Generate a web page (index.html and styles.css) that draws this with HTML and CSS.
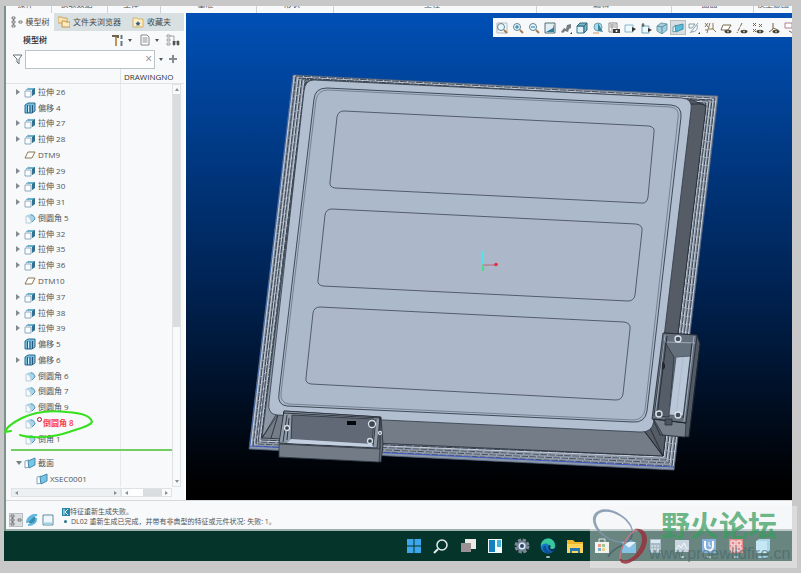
FILE: index.html
```html
<!DOCTYPE html>
<html lang="zh-CN">
<head>
<meta charset="utf-8">
<title>DL02</title>
<link rel="stylesheet" href="styles.css">
</head>
<body>
<svg class="sprite" aria-hidden="true">
  <symbol id="extrude" viewBox="0 0 12 12"><path d="M1 5h6v6H1z" fill="#fafcfd" stroke="#8eaabd"/><path d="M3 4l2-2h6v6l-3 2V4z" fill="#69b4d3"/><path d="M8 4l3-2v6l-3 2z" fill="#31718f"/><path d="M2 4l3-2" stroke="#6b9bb5"/></symbol>
  <symbol id="offset" viewBox="0 0 12 12"><path d="M1 3l3-2h7v8l-3 2H1z" fill="#72bfe0" stroke="#356d8e"/><path d="M3.500 3v8M6 3v8M8.500 3v8" stroke="#28597c"/><path d="M4.500 4v6" stroke="#d5f1fb"/></symbol>
  <symbol id="round" viewBox="0 0 12 12"><path d="M2 4l4-2c3 0 5 2 5 5l-4 4c0-4-2-6-5-7z" fill="#a7d4e8"/><path d="M2 4c3 0 5 3 5 7H2z" fill="#f4fafc" stroke="#b8ccda"/><path d="M7 3c2 0 4 2 4 4L8 10" fill="none" stroke="#5593b8"/></symbol>
  <symbol id="plane" viewBox="0 0 12 12"><path d="M4 3h7L8 9H1z" fill="#fff" stroke="#8a7750"/></symbol>
  <symbol id="section" viewBox="0 0 12 12"><path d="M1 4l4-1v7l-4 1z" fill="#fff" stroke="#82a6bd"/><path d="M4 4l7-3v7l-6 3z" fill="#75c7e8" stroke="#4c88a8"/></symbol>
  <symbol id="treeicon" viewBox="0 0 12 12"><path d="M1 1h3v2H1zM1 5h3v2H1zM1 9h3v2H1zM8 5h3v2H8zM2.500 3v2M2.500 7v2" fill="none" stroke="#666" stroke-width=".8"/></symbol>
  <symbol id="lens" viewBox="0 0 12 12"><circle cx="5" cy="5" r="3.500" fill="#e9f8fd" stroke="#5c8698"/><path d="M8 8l3 3" stroke="#a57f52" stroke-width="2"/></symbol>
  <symbol id="cube" viewBox="0 0 12 12"><path d="M1 4h7v7H1z" fill="#e0f3f9" stroke="#34788f"/><path d="M1 4l3-3h7L8 4zM8 4l3-3v7l-3 3z" fill="#79b7cb" stroke="#2d6578"/></symbol>
  <symbol id="eye" viewBox="0 0 12 12"><ellipse cx="8" cy="9.500" rx="3.500" ry="1.800" fill="#464033"/><circle cx="8" cy="9.500" r="1" fill="#bbb"/></symbol>
</svg>

<div class="screen">
  <div class="app">
    <nav class="ribbon">
      <span>操作</span><span>获取数据</span><span>主体</span><span>基准</span><span>形状</span><span>工程</span><span>编辑</span><span>曲面</span><span>模型意图</span>
    </nav>
    <main class="work">
      <aside class="panel">
        <div class="tabs">
          <button class="tab active"><svg class="icon"><use href="#treeicon"/></svg>模型树</button>
          <button class="tab"><svg class="icon" viewBox="0 0 12 12"><path d="M0 1h4l1 1h4v5H0z" fill="#f7e3b4" stroke="#c9a660"/><path d="M4 5h3l1 1h4v5H4z" fill="#ffebb9" stroke="#bd964e"/></svg>文件夹浏览器</button>
          <button class="tab last"><svg class="icon" viewBox="0 0 12 12"><path d="M1 2h4l1 1h5v8H1z" fill="#fff0c4" stroke="#d3b066"/><path d="M6 5l.8 1.400L8.500 7 7.300 8.200 7.500 10 6 9l-1.500 1 .2-1.800L3.500 7l1.700-.6z" fill="#32588d"/></svg>收藏夹</button>
        </div>
        <div class="titlebar">
          <h1>模型树</h1>
          <button class="tool" aria-label="设置"><svg class="icon" viewBox="0 0 12 12"><path d="M0 1h7v3H5V3H0z" fill="#6d6454"/><path d="M4 3v9" stroke="#c29355" stroke-width="2"/><path d="M9.500 1v4M9.500 7v5" stroke="#647b87" stroke-width="2"/></svg><i class="caret"></i></button>
          <button class="tool" aria-label="显示"><svg class="icon" viewBox="0 0 12 12"><path d="M2 1h6l2 2v8H2z" fill="#fff" stroke="#888"/><path d="M3.500 4h5M3.500 6h5M3.500 8h5" stroke="#849398"/></svg><i class="caret"></i></button>
          <button class="tool" aria-label="查找"><svg class="icon wide" viewBox="0 0 14 12"><path d="M1 1h3v2H1zM1 5h3v2H1zM1 9h3v2H1zM4 2h4v4" fill="none" stroke="#9da2a4"/><path d="M7 7h2v4H7zM11 7h2v4h-2zM8 8h4" fill="#555" stroke="#555" stroke-width=".6"/></svg></button>
        </div>
        <div class="search">
          <svg class="icon" viewBox="0 0 12 12"><path d="M1 2h9L7 6v5L5 9V6z" fill="#fff" stroke="#667278"/></svg>
          <label class="field"><input type="text" aria-label="搜索"><span class="clear">×</span></label>
          <i class="caret"></i>
          <button class="tool" aria-label="添加"><svg class="icon" viewBox="0 0 12 12"><path d="M6 2v8M2 6h8" stroke="#858b8e" stroke-width="2"/></svg></button>
        </div>
        <div class="columns"><span></span><span>DRAWINGNO</span></div>
        <div class="treebox">
          <div class="tree">
            <ul class="rows">
              <li class="open"><svg class="icon"><use href="#extrude"/></svg>拉伸 26</li>
              <li><svg class="icon"><use href="#offset"/></svg>偏移 4</li>
              <li class="open"><svg class="icon"><use href="#extrude"/></svg>拉伸 27</li>
              <li class="open"><svg class="icon"><use href="#extrude"/></svg>拉伸 28</li>
              <li><svg class="icon"><use href="#plane"/></svg>DTM9</li>
              <li class="open"><svg class="icon"><use href="#extrude"/></svg>拉伸 29</li>
              <li class="open"><svg class="icon"><use href="#extrude"/></svg>拉伸 30</li>
              <li class="open"><svg class="icon"><use href="#extrude"/></svg>拉伸 31</li>
              <li><svg class="icon"><use href="#round"/></svg>倒圆角 5</li>
              <li class="open"><svg class="icon"><use href="#extrude"/></svg>拉伸 32</li>
              <li class="open"><svg class="icon"><use href="#extrude"/></svg>拉伸 35</li>
              <li class="open"><svg class="icon"><use href="#extrude"/></svg>拉伸 36</li>
              <li><svg class="icon"><use href="#plane"/></svg>DTM10</li>
              <li class="open"><svg class="icon"><use href="#extrude"/></svg>拉伸 37</li>
              <li class="open"><svg class="icon"><use href="#extrude"/></svg>拉伸 38</li>
              <li class="open"><svg class="icon"><use href="#extrude"/></svg>拉伸 39</li>
              <li><svg class="icon"><use href="#offset"/></svg>偏移 5</li>
              <li class="open"><svg class="icon"><use href="#offset"/></svg>偏移 6</li>
              <li><svg class="icon"><use href="#round"/></svg>倒圆角 6</li>
              <li><svg class="icon"><use href="#round"/></svg>倒圆角 7</li>
              <li><svg class="icon"><use href="#round"/></svg>倒圆角 9</li>
              <li class="failed"><svg class="icon"><use href="#round"/></svg><i class="dot"></i>倒圆角 8</li>
              <li><svg class="icon"><use href="#round"/></svg>倒角 1</li>
            </ul>
            <ul class="rows sections">
              <li class="expanded"><svg class="icon"><use href="#section"/></svg>截面</li>
              <li class="child"><svg class="icon"><use href="#section"/></svg>XSEC0001</li>
            </ul>
          </div>
          <div class="vscroll"><i class="arrow up"></i><i class="thumb"></i><i class="arrow down"></i></div>
        </div>
        <div class="hscroll">
          <div class="bar"><i class="arrow left"></i><i class="arrow right"></i></div>
          <div class="bar second"><i class="arrow left"></i><i class="grip"></i><i class="track"></i><i class="arrow right"></i></div>
        </div>
        <svg class="mark" viewBox="0 0 92 32" aria-hidden="true"><path d="M17 27C30 31 52 29 66 24 78 20 87 18 89 14 88 8 78 5 64 4 48 2 31 4 19 10 9 15 3 20 2 24l6-1" fill="none" stroke="#35e01c" stroke-width="2" stroke-linecap="round"/></svg>
      </aside>

      <section class="view">
        <svg class="model" viewBox="186 13 606 487" preserveAspectRatio="none" role="img" aria-label="DL02">
          <g stroke-linejoin="round" stroke-width=".8">
            <path d="M293 75L718 96 674 470 249 449z" fill="#8c98a8" stroke="#50617b"/>
            <g fill="none" stroke="#c7cfda" stroke-width="1">
              <path d="M294 76L716 98 673 466 251 446z"/><path d="M298 77L713 99 670 463 254 444z"/><path d="M301 79L710 101 667 460 257 442z"/><path d="M304 80L707 102 664 457 260 441z"/>
            </g>
            <g fill="none" stroke="#262f3b" stroke-dasharray="7 1">
              <path d="M296 76L715 98 672 466 253 446z"/><path d="M299 78L712 100 669 463 256 444z"/><path d="M302 79L709 101 666 460 258 442z"/><path d="M305 80L706 103 663 456 261 440z"/>
            </g>
            <path d="M249 446l425 21" stroke="#4059c5" stroke-width="1"/>
            <path d="M293 77L250 445" stroke="#3e66ac"/>
            <path d="M306 82l-44 356 401 18 43-351z" fill="#737c87" stroke="#202832"/>
            <path d="M690 99l16 7-43 350-18-24z" fill="#555c66" stroke="#252c36"/>
            <path d="M262 438l15-22 29-334z" fill="#8d98a6" stroke="#39424e"/>
            <path d="M276 415l-14 23M278 415l-7 23M645 432l18 24M650 428l13 28M690 104h14" stroke="#20262f"/>
            <path d="M314 80L682 98Q693 99 691 110L654 421Q652 433 640 432L277 415Q267 414 269 402L304 91Q305 80 314 80z" fill="#b2bfd0" stroke="#303a48"/>
            <path d="M327 88L671 105Q682 106 681 117L647 411Q645 423 633 422L287 406Q277 405 279 393L314 99Q315 88 327 88z" fill="#acb9cb" stroke="#252d38"/>
            <path d="M328 90L670 107Q680 108 678 118L645 410Q643 420 633 420L289 404Q280 403 281 393L316 100Q318 90 328 90z" fill="none" stroke="#667386"/>
            <g fill="#acb8ca" stroke="#3c4552">
              <path d="M344 111L649 126Q655 127 654 132L648 197Q647 204 641 203L335 188Q329 187 330 182L337 117Q338 111 344 111z"/>
              <path d="M332 209L636 224Q643 225 642 231L635 295Q634 301 628 301L323 286Q317 285 318 280L325 215Q326 209 332 209z"/>
              <path d="M320 307L624 322Q631 323 630 329L623 394Q622 400 616 400L311 384Q305 383 306 378L313 313Q314 307 320 307z"/>
            </g>
            <path d="M284 411l97 6 2 28-2 17-102-5 1-12z" fill="#666e79" stroke="#252c35"/>
            <path d="M284 411l96 6-3 31-98-5z" fill="#8e9aa8" stroke="#222a34"/>
            <path d="M292 415l82 4-2 27-81-4z" fill="#606975" stroke="#252c35"/>
            <path d="M291 439l82 5v3l-86-4z" fill="#c2d0e1"/>
            <path d="M279 444l101 5-1 13-100-5z" fill="#727b86" stroke="#2f3741"/>
            <path d="M283 413l98 5M287 415l-4 27M376 419l-3 27M380 418v31M289 418l-2 22" stroke="#161d27" fill="none"/>
            <path d="M347 421h9v4h-9z" fill="#04070c"/>
            <g fill="#3d4650" stroke="#d7dfe8" stroke-width="1.300"><circle cx="287" cy="428" r="2.500"/><circle cx="372" cy="424" r="3.500"/><circle cx="370" cy="441" r="2.500"/><circle cx="380" cy="433" r="1.500"/></g>
            <path d="M664 333l33 2 3 9-11 93-29-2-7-16z" fill="#515a65" stroke="#222a34"/>
            <path d="M653 418l33 5-1 14-22-2z" fill="#77818c" stroke="#303943"/>
            <path d="M663 333l34 2-11 88-34-4z" fill="#65707d" stroke="#1e2630"/>
            <path d="M664 341l10 16-5 60-15-1z" fill="#545d68" stroke="#29313c"/>
            <path d="M676 357l15-1-7 60-15-1z" fill="#bac7d8" stroke="#424d5b"/>
            <path d="M683 357l-7 59M665 335l-10 82M694 336l-10 86M665 342l30 1" fill="none" stroke="#aab7c6"/>
            <path d="M667 336l-10 80M692 343l-9 75M654 419l32 4M689 437l11-92" fill="none" stroke="#1b222c"/>
            <path d="M662 362l3 2v4l-3 2z" fill="#20262e"/><path d="M665 419h7v6h-7z" fill="#4c545f" stroke="#262d35"/>
            <g fill="#454e5a" stroke="#dbe3eb" stroke-width="1.300"><circle cx="678" cy="339" r="3"/><circle cx="659" cy="414" r="3"/><circle cx="678" cy="415" r="3"/></g>
            <path d="M483 251v13" stroke="#50e5e8" stroke-width="2"/><path d="M483 265h12" stroke="#c54e66"/><path d="M483 265v6" stroke="#45df87" stroke-width="2"/><circle cx="496" cy="264.500" r="1.800" fill="#e32b43"/>
          </g>
        </svg>
        <div class="toolbar">
          <button aria-label="重新调整"><svg class="icon"><path d="M1 1h10v10H1z" fill="none" stroke="#b4bcc0"/><use href="#lens"/></svg></button>
          <button aria-label="放大"><svg class="icon"><use href="#lens"/><path d="M3 5h4M5 3v4" stroke="#197ba0"/></svg></button>
          <button aria-label="缩小"><svg class="icon"><use href="#lens"/><path d="M3 5h4" stroke="#197ba0"/></svg></button>
          <button aria-label="重画"><svg class="icon"><path d="M1 1h10v10H1z" fill="#e3eff3" stroke="#55717c"/><path d="M10 2L9 6 2 10h8z" fill="#307e9a"/></svg></button>
          <button aria-label="渲染"><svg class="icon"><path d="M1 10l3-4 2 1 1-4 4-1v4l-2 1-1 3-3-1-2 2z" fill="#777e82"/><path d="M10 12h2v-2z" fill="#333"/></svg></button>
          <button aria-label="显示样式"><svg class="icon"><use href="#cube"/></svg></button>
          <button aria-label="外观"><svg class="icon"><circle cx="6" cy="5" r="4" fill="#a5dcec" stroke="#759eab"/><path d="M6 1v8l5 1z" fill="#39869e"/><path d="M1 11h6" stroke="#d59964"/></svg></button>
          <button aria-label="视图管理器"><svg class="icon"><path d="M1 1h8v9H1z" fill="#fff" stroke="#8a8a8a"/><path d="M2 3h6M2 5h6M4 2v7" stroke="#999"/><path d="M5 7h7v4H5z" fill="#3b3b3b"/><circle cx="8.500" cy="9" r="1" fill="#fff"/></svg></button>
          <button aria-label="已保存方向"><svg class="icon"><path d="M1 3h8v7H1z" fill="#edf9fc" stroke="#88b7c6"/><path d="M8 5l4 2-4 3z" fill="#333"/></svg></button>
          <button aria-label="视图法向"><svg class="icon"><path d="M2 4h7v7H2z" fill="#edf9fc" stroke="#6fa5b5"/><path d="M3 1v4M1.500 3h3" stroke="#444"/><path d="M8 6l4 2-4 2z" fill="#333"/></svg></button>
          <button aria-label="透视图"><svg class="icon"><path d="M1 4l4-3 6 1v6l-5 4-5-3z" fill="#a3cfdf" stroke="#6f9dac"/><path d="M1 4l5 1 5-3M6 5v7" fill="none" stroke="#5e8fa2"/></svg></button>
          <button class="pressed" aria-label="截面"><svg class="icon"><path d="M1 5l3-2v6l-3 1z" fill="#eefbff" stroke="#649cad"/><path d="M3 4l8-2v5L4 10z" fill="#58bdd9" stroke="#4591a8"/></svg></button>
          <button aria-label="基准显示"><svg class="icon"><path d="M1 2h6L4 6H1zM2 11l8-10M3 10c6 0 7-4 6-7" fill="none" stroke="#6f8e93" stroke-width=".8"/><path d="M10 12h2v-2z" fill="#333"/></svg></button>
          <button aria-label="基准过滤"><svg class="icon"><path d="M1 1l3 4M4 1L1 5M6 1L3 11M9 1v6H5M9 7l3 3M1 8h3" fill="none" stroke="#806b43" stroke-width=".9"/></svg></button>
          <button aria-label="平面显示"><svg class="icon"><path d="M3 3h8L8 8H1z" fill="#fff" stroke="#786849"/><use href="#eye"/></svg></button>
          <button aria-label="轴显示"><svg class="icon"><path d="M6 1L1 11" stroke="#786849" stroke-dasharray="4 1"/><use href="#eye"/></svg></button>
          <button aria-label="点显示"><svg class="icon"><path d="M1 1l3 3M4 1L1 4M7 2l3 3M10 2L7 5M1 7l3 3M4 7l-3 3" stroke="#7b6440"/><use href="#eye"/></svg></button>
          <button aria-label="坐标系显示"><svg class="icon"><path d="M5 1v6L1 10M5 6l5 2" fill="none" stroke="#7b6440"/><use href="#eye"/></svg></button>
          <button aria-label="注释显示"><svg class="icon"><path d="M1 1h7v5H1z" fill="#fff" stroke="#ae828b"/><path d="M5 9l4 2" stroke="#786849"/></svg></button>
        </div>
      </section>
    </main>
    <footer class="status">
      <div class="switches">
        <button class="pressed" aria-label="模型树"><svg class="icon"><use href="#treeicon"/></svg></button>
        <button aria-label="浏览器"><svg class="icon" viewBox="0 0 12 12"><circle cx="6" cy="6" r="4" fill="#388dad"/><path d="M1 9c0-6 7-9 10-8-3 0-7 3-8 6M2 11c5 0 9-3 8-7" fill="none" stroke="#60b7df" stroke-width="2"/></svg></button>
        <button aria-label="全屏"><svg class="icon" viewBox="0 0 12 12"><path d="M1 1h10v10H1z" fill="#eef7fb" stroke="#668b9c"/><path d="M2 9.500h8" stroke="#9fd1e4" stroke-width="2"/></svg></button>
      </div>
      <div class="messages">
        <p><svg class="icon small" viewBox="0 0 8 8"><path d="M0 0h8v8H0z" fill="#2785a9"/><path d="M2 1v6M6 1L3 4l3 3" fill="none" stroke="#e8fbff"/></svg>特征重新生成失败。</p>
        <p class="note">DL02 重新生成已完成，并带有非典型的特征或元件状况: 失败: 1。</p>
      </div>
    </footer>
  </div>
  <nav class="taskbar">
    <button aria-label="开始"><svg viewBox="0 0 16 16"><path d="M1 1h6.500v6.500H1zM8.500 1H15v6.500H8.500zM1 8.500h6.500V15H1zM8.500 8.500H15V15H8.500z" fill="#3da7ee"/></svg></button>
    <button aria-label="搜索"><svg viewBox="0 0 16 16"><circle cx="9" cy="7" r="5" fill="none" stroke="#e5eeee" stroke-width="1.500"/><path d="M5 11l-4 4" stroke="#e5eeee" stroke-width="2"/></svg></button>
    <button aria-label="任务视图"><svg viewBox="0 0 16 16"><path d="M5 1h11v10H5z" fill="#ede9e7"/><path d="M1 5h10v9H1z" fill="#999193"/></svg></button>
    <button aria-label="小组件"><svg viewBox="0 0 16 16"><path d="M1 1h14v14H1z" fill="#f3fafc"/><path d="M2 2h6v12H2z" fill="#1480c0"/><path d="M10 2h4v7h-4z" fill="#42b4dc"/></svg></button>
    <button aria-label="设置"><svg viewBox="0 0 16 16"><circle cx="8" cy="8" r="6" fill="none" stroke="#7e8794" stroke-width="3" stroke-dasharray="3.200 1.510"/><circle cx="8" cy="8" r="5.500" fill="#727e90"/><circle cx="8" cy="8" r="3.500" fill="#d6edff"/><circle cx="8" cy="8" r="2" fill="#34445d"/></svg></button>
    <button class="running" aria-label="浏览器"><svg viewBox="0 0 16 16"><circle cx="8" cy="8" r="7.500" fill="#1479c9"/><path d="M1 6C4-2 15-1 15 8c0 4-6 4-6 1 1-4-5-5-8-1z" fill="#38c99b"/><path d="M6 8c0 5 5 7 8 4-3 5-10 4-11-1 0-2 1-4 3-3z" fill="#0c4f9b"/><path d="M9 7c2 0 2 2 1 3 1 2 5 1 6-1l-2 4c-5 1-7-3-5-6z" fill="#082f52"/></svg></button>
    <button aria-label="文件"><svg viewBox="0 0 16 16"><path d="M0 2h6l2 2h8v11H0z" fill="#efb72c"/><path d="M0 6h16v9H0z" fill="#ffd45b"/><path d="M3 10h10v5h-2v-2H5v2H3z" fill="#2877b5"/></svg></button>
    <button aria-label="商店"><svg viewBox="0 0 16 16"><path d="M1 4h14v11H1z" fill="#f2f1e8"/><path d="M5 4V1h6v3" fill="none" stroke="#cce0e7"/><path d="M4 6h3v3H4z" fill="#df5642"/><path d="M8 6h3v3H8z" fill="#69a84d"/><path d="M4 10h3v3H4z" fill="#2a79b7"/><path d="M8 10h3v3H8z" fill="#e4b539"/></svg></button>
    <button aria-label="邮件"><svg viewBox="0 0 16 16"><path d="M1 5l7-4 7 4v10H1z" fill="#237bc0"/><path d="M1 4h14L8 10z" fill="#d6eefb"/><path d="M1 5l7 5 7-5v10H1z" fill="#369bdf"/></svg></button>
    <button aria-label="计算器"><svg viewBox="0 0 16 16"><path d="M3 1h11v14H3z" fill="#7090a4"/><path d="M4 2h9v3H4z" fill="#c9e2ee"/><path d="M4 8h9M4 11h9M4 13h9" stroke="#e6f2f4" stroke-dasharray="2 1"/></svg></button>
    <button class="running" aria-label="监视器"><svg viewBox="0 0 16 16"><path d="M1 2h14v12H1z" fill="#a9c0d3"/><path d="M2 11l3-4 2 3 3-5 3 6" fill="none" stroke="#f5faff"/></svg></button>
    <button class="running" aria-label="管家"><svg viewBox="0 0 16 16"><path d="M1 1h14v14H1z" fill="#3680cb"/><path d="M4 3v5c0 6 8 6 8 0V3" fill="none" stroke="#fff" stroke-width="2"/><path d="M8 4v4h2" fill="none" stroke="#fff"/></svg></button>
    <button class="running" aria-label="词典"><svg viewBox="0 0 16 16"><path d="M1 1h14v14H1z" fill="#dc3939"/><path d="M3 3h4v4H3zM9 3h4v4H9zM3 9h4v4H3zM9 9h4v4H9z" fill="none" stroke="#fff"/></svg></button>
    <button class="running wide" aria-label="模型"><svg viewBox="0 0 16 16"><path d="M1 3l3-2h11v11l-3 3H1z" fill="#72bddd"/><path d="M1 3h11v12H1z" fill="#a2dcf3"/></svg></button>
  </nav>
  <div class="watermark">
    <svg viewBox="0 0 58 58" aria-hidden="true">
      <g transform="rotate(32 23 18)"><path fill-rule="evenodd" d="M1 18a22 14 0 1 0 44 0a22 14 0 1 0-44 0zM4 18a20 12 0 1 1 40 0a20 12 0 1 1-40 0z" fill="#7e93aa" opacity=".85"/></g>
      <path d="M42 23c2 15-17 12-24 26" fill="none" stroke="#374f5f" stroke-width="1.500" opacity=".6"/>
      <path d="M44 21c19-4 17 26-5 34-6 2-10-1-9-5 4 5 14 1 19-9 5-9 4-17-5-20z" fill="#95313c" opacity=".85"/>
      <path d="M30 51c0-9 6-24 16-29" fill="none" stroke="#bc7980" stroke-width="1.500"/>
    </svg>
    <div class="brand"><strong>野火论坛</strong><span>www.proewildfire.cn</span></div>
  </div>
</div>
</body>
</html>
```
FILE: styles.css
```css
* { box-sizing: border-box; }
body {
  margin: 0;
  min-height: 100vh;
  display: flex;
  padding: 6px 9px 12px 4px;
  background: #c8c8c8;
  color: #505458;
  font: 8px/12px "Open Sans", "Noto Sans CJK SC", sans-serif;
}
button {
  padding: 0;
  border: 0;
  background: none;
  color: inherit;
  font: inherit;
  display: flex;
  align-items: center;
  justify-content: center;
}
ul, p, h1 { margin: 0; padding: 0; list-style: none; }
.sprite { position: absolute; width: 0; height: 0; }
.icon { width: 12px; height: 12px; flex: none; }
.icon.small { width: 8px; height: 8px; }
.icon.wide { width: 14px; }

.screen { position: relative; flex: 1; min-width: 0; display: flex; flex-direction: column; }
.app {
  flex: 1;
  display: flex;
  flex-direction: column;
  background: #f7f9fb;
  border-left: 2px solid #7c918b;
}
.ribbon {
  height: 7px;
  overflow: hidden;
  display: grid;
  grid-template-columns: 46fr 56fr 53fr 96fr 77fr 203fr 135fr 82fr 38fr;
  line-height: 10px;
  text-align: center;
  white-space: nowrap;
}
.ribbon span { height: 14px; margin-top: -7px; padding-right: 6px; border-right: 1px solid #ccd2d6; }
.ribbon span:last-child { padding: 0; border: 0; }

.work { flex: 1; display: flex; }
.panel { position: relative; width: 180px; flex: none; display: flex; flex-direction: column; border-right: 2px solid #fff; }
.tabs { display: flex; height: 18px; background: #d9e0e1; }
.tab { gap: 3px; padding: 0 4px; white-space: nowrap; color: #44484b; }
.tab.active { width: 48px; background: #f7f9fb; }
.tab.last { margin-left: 3px; }
.titlebar { display: flex; align-items: center; height: 18px; gap: 7px; padding: 0 4px 0 17px; }
h1 { flex: 1; font-size: 8px; font-weight: 500; color: #202326; }
.tool { gap: 4px; }
.caret { flex: none; border: 2px solid transparent; border-top: 3px solid #555; border-bottom: 0; }
.search { display: flex; align-items: center; gap: 4px; height: 20px; padding: 0 5px 0 6px; }
.search > .icon { margin-right: -3px; }
.field { flex: 1; display: flex; align-items: center; height: 19px; padding-right: 2px; border: 1px solid #b9c3c8; background: #fff; }
.field input { flex: 1; min-width: 0; width: 0; border: 0; outline: 0; background: none; font: inherit; }
.clear { color: #888; font-size: 12px; }
.columns { display: grid; grid-template-columns: 114px 1fr; height: 15px; border-bottom: 1px solid #e0e4e6; line-height: 16px; }
.columns span { padding-left: 3px; color: #303437; }
.columns span + span { border-left: 1px solid #e0e4e6; }

.treebox { flex: 1; display: flex; padding: 0 3px 0 5px; }
.tree { flex: 1; display: flex; flex-direction: column; background: linear-gradient(#e6eaed, #e6eaed) 109px 0 / 1px 100% no-repeat; }
.rows { flex: 23; display: grid; grid-auto-rows: 1fr; padding-bottom: 3px; border-bottom: 2px solid #74cd60; }
.rows.sections { flex: 2; padding: 4px 0 0; border: 0; }
.rows li { display: flex; align-items: center; gap: 2px; padding-left: 13px; white-space: nowrap; }
.rows .open, .rows .expanded { padding-left: 5px; }
.rows .open::before { content: ""; margin-right: 2px; border: 3px solid transparent; border-left: 4px solid #858b8e; border-right: 0; }
.rows .expanded::before { content: ""; border: 3px solid transparent; border-top: 4px solid #777d80; border-bottom: 0; }
.rows .child { padding-left: 25px; }
.rows .failed { gap: 1px; color: #fa3d48; font-weight: 600; }
.dot { width: 5px; height: 5px; margin-bottom: 6px; border: 1px solid #a31830; border-radius: 50%; }
.vscroll { width: 9px; display: flex; flex-direction: column; border: 1px solid #dfe3e5; }
.thumb { flex: 233; background: #d9dddf; }
.vscroll::after { content: ""; order: 1; flex: 150; }
.arrow { flex: none; width: 9px; height: 9px; position: relative; display: grid; place-items: center; }
.vscroll .arrow { width: 7px; }
.down { order: 2; }
.arrow::before { content: ""; border: 2px solid transparent; }
.up::before { border-bottom: 3px solid #8a8f92; border-top: 0; }
.down::before { border-top: 3px solid #8a8f92; border-bottom: 0; }
.left::before { border-right: 3px solid #8a8f92; border-left: 0; }
.right::before { border-left: 3px solid #8a8f92; border-right: 0; }
.hscroll { display: flex; padding: 1px 12px 3px 5px; }
.bar { width: 110px; height: 9px; display: flex; justify-content: space-between; background: #edf0f2; border: 1px solid #dfe3e5; align-items: center; }
.bar.second { flex: 1; width: auto; background: #fafbfc; }
.grip { width: 12px; height: 7px; background: #fff; }
.track { flex: 1; height: 7px; background: #d9dddf; }
.mark { position: absolute; left: -3px; bottom: 60px; width: 92px; height: 32px; }

.view { position: relative; flex: 1; min-width: 0; background: linear-gradient(#0050b6, #00214f 58%, #000 97%); }
.model { position: absolute; width: 100%; height: 100%; }
.toolbar {
  position: absolute;
  top: 5px;
  right: 0;
  width: 299px;
  height: 19px;
  overflow: hidden;
  display: flex;
  align-items: center;
  padding-left: 1px;
  background: #f7f8fa;
}
.toolbar button { width: 16px; height: 15px; flex: none; }
.pressed { background: #d9dddf; box-shadow: inset 0 0 0 1px #b6bdc0; }

.status { height: 31px; display: flex; align-items: center; border-top: 1px solid #d5d9db; border-bottom: 2px solid #9eb0ad; }
.switches { display: flex; gap: 2px; padding: 10px 5px 0 3px; }
.switches button { width: 14px; height: 14px; }
.messages { flex: 1; padding: 3px 0 0 2px; font-size: 7px; line-height: 10px; white-space: nowrap; }
.messages p { display: flex; align-items: center; }
.note::before { content: ""; width: 3px; height: 3px; margin: 0 4px 0 2px; border-radius: 50%; background: #287781; }

.taskbar { height: 30px; display: grid; grid-template-columns: repeat(14, 1fr); padding: 0 16px 0 397px; background: #05342a; }
.taskbar button { position: relative; }
.taskbar svg { width: 16px; height: 16px; }
.running::after { content: ""; position: absolute; bottom: 3px; width: 4px; height: 2px; border-radius: 1px; background: #a5b5b1; }
.running.wide::after { width: 10px; background: #61b5df; }

.watermark {
  position: absolute;
  right: -5px;
  bottom: -7px;
  width: 207px;
  height: 62px;
  display: flex;
  gap: 1px;
  background: rgba(245, 245, 245, .42);
}
.watermark svg { width: 58px; height: 58px; flex: none; margin-top: 2px; }
.brand { display: flex; flex-direction: column; white-space: nowrap; }
.brand strong { padding-left: 12px; font: 700 29px/36px "Noto Sans CJK SC", sans-serif; color: rgba(55, 157, 94, .72); }
.brand span { font: 16px/24px "Liberation Sans", sans-serif; color: rgba(66, 102, 108, .65); }
```
